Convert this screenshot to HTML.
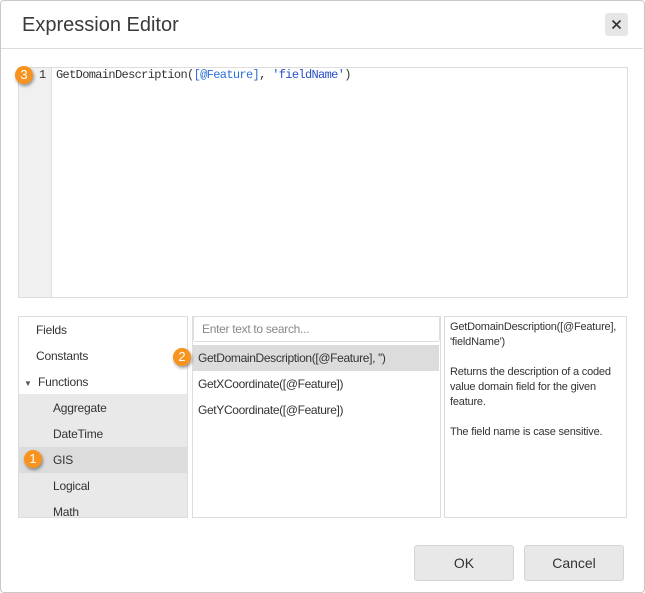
<!DOCTYPE html>
<html><head><style>
body{margin:0;width:645px;height:593px;background:#fff;font-family:"Liberation Sans",sans-serif;overflow:hidden;position:relative}
.abs{position:absolute}
.dlg{left:0;top:0;width:643px;height:591px;border:1px solid #c8c8c8;border-radius:4px}
.t{font-size:12px;color:#333;letter-spacing:-0.35px}
.badge{position:absolute;width:18px;height:18px;border-radius:50%;background:#f7931e;color:#fff;font-size:13px;text-align:center;line-height:18px;box-shadow:1px 2px 3px rgba(0,0,0,.4)}
.btn{position:absolute;top:545px;height:34px;border:1px solid #d4d4d4;border-radius:3px;background:#e8e8e8;font-size:14px;color:#333;text-align:center;line-height:34px}
.li{position:absolute;left:0;width:168px;height:26px;line-height:26px;font-size:12px;color:#333;letter-spacing:-0.2px}
</style></head><body>
<div class="abs dlg"></div>
<div class="abs" style="left:22px;top:14px;font-size:20px;color:#3a3a3a">Expression Editor</div>
<div class="abs" style="left:605px;top:13px;width:23px;height:23px;background:#e6e6e6;border-radius:3px"><svg width="23" height="23"><path d="M7.5 7.5L15.5 15.5M15.5 7.5L7.5 15.5" stroke="#333" stroke-width="1.6"/></svg></div>
<div class="abs" style="left:1px;top:48px;width:642px;height:1px;background:#ddd"></div>
<div class="abs" style="left:18px;top:67px;width:608px;height:229px;border:1px solid #ddd"></div>
<div class="abs" style="left:19px;top:68px;width:32px;height:229px;background:#f0f0f0;border-right:1px solid #ddd"></div>
<div class="abs" style="left:39px;top:68px;font-family:'Liberation Mono',monospace;font-size:12px;color:#333">1</div>
<div class="abs" style="left:56px;top:68px;font-family:'Liberation Mono',monospace;font-size:12px;color:#333;letter-spacing:-0.65px">GetDomainDescription(<span style="color:#2a6fd6">[@Feature]</span>, <span style="color:#2a4fc6">'fieldName'</span>)</div>
<div class="badge" style="left:15px;top:66px">3</div>

<div class="abs" style="left:18px;top:316px;width:168px;height:200px;border:1px solid #ddd;overflow:hidden">
<div class="abs" style="left:0;top:77px;width:169px;height:130px;background:#e9e9e9"></div>
<div class="li" style="top:0;padding-left:17px">Fields</div>
<div class="li" style="top:26px;padding-left:17px">Constants</div>
<div class="li" style="top:52px;padding-left:5px"><span style="font-size:8px;color:#555">▼</span>&nbsp; Functions</div>
<div class="li" style="top:78px;padding-left:34px">Aggregate</div>
<div class="li" style="top:104px;padding-left:34px">DateTime</div>
<div class="li" style="top:130px;padding-left:34px;width:135px;background:#dcdcdc">GIS</div>
<div class="li" style="top:156px;padding-left:34px">Logical</div>
<div class="li" style="top:182px;padding-left:34px">Math</div>
</div>
<div class="badge" style="left:24px;top:450px">1</div>

<div class="abs" style="left:192px;top:316px;width:247px;height:200px;border:1px solid #ddd"></div>
<div class="abs" style="left:193px;top:316px;width:237px;height:24px;border:1px solid #ddd;border-radius:3px;background:#fff;font-size:12px;color:#888;line-height:24px;padding-left:8px;letter-spacing:-0.3px">Enter text to search...</div>
<div class="abs t" style="left:193px;top:345px;width:241px;height:26px;line-height:26px;background:#dcdcdc;padding-left:5px">GetDomainDescription([@Feature], '')</div>
<div class="abs t" style="left:198px;top:371px;line-height:26px">GetXCoordinate([@Feature])</div>
<div class="abs t" style="left:198px;top:397px;line-height:26px">GetYCoordinate([@Feature])</div>
<div class="badge" style="left:173px;top:348px">2</div>

<div class="abs" style="left:444px;top:316px;width:181px;height:200px;border:1px solid #ddd"></div>
<div class="abs" style="left:450px;top:320px;width:172px;font-size:11px;line-height:15px;color:#333;letter-spacing:-0.2px">GetDomainDescription([@Feature], 'fieldName')<br><br>Returns the description of a coded value domain field for the given feature.<br><br>The field name is case sensitive.</div>

<div class="btn" style="left:414px;width:98px">OK</div>
<div class="btn" style="left:524px;width:98px">Cancel</div>
</body></html>
